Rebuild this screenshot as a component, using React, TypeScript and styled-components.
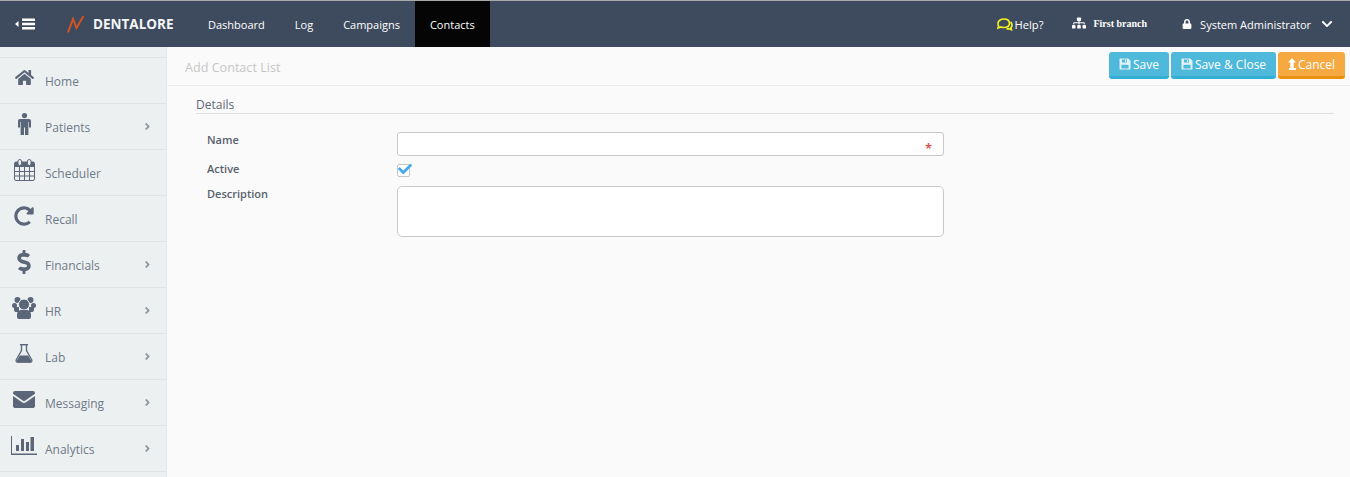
import styled, { createGlobalStyle } from 'styled-components';
import type { ReactNode } from 'react';
import {
  FaHome,
  FaRedoAlt,
  FaDollarSign,
  FaSitemap,
  FaLock,
  FaChevronDown,
  FaAngleRight,
  FaCheck,
} from 'react-icons/fa';

const GlobalStyle = createGlobalStyle`
  html, body {
    margin: 0;
    padding: 0;
    height: 100%;
    overflow: hidden;
    background: #fafafa;
    font-family: 'Open Sans', 'Liberation Sans', sans-serif;
  }
  * {
    box-sizing: border-box;
  }
`;

const Page = styled.div`
  width: 1350px;
  height: 477px;
  display: flex;
  flex-direction: column;
  overflow: hidden;
`;

const TopBar = styled.header`
  height: 47px;
  flex: none;
  display: flex;
  align-items: stretch;
  background: #3e4b5e;
  border-top: 1px solid #a9a9a9;
  color: #fff;
`;

const MenuToggle = styled.div`
  width: 67px;
  padding-left: 15px;
  display: flex;
  align-items: center;
`;

const Brand = styled.div`
  width: 141px;
  display: flex;
  align-items: center;
  gap: 8px;
  font-size: 13.5px;
  font-weight: 700;
  color: #f4f6f8;
`;

const NavLink = styled.a<{ $active?: boolean }>`
  display: flex;
  align-items: center;
  padding: 0 15px;
  font-size: 11px;
  color: #fff;
  background: ${(p) => (p.$active ? '#050505' : 'transparent')};
`;

const NavLinks = styled.div`
  display: flex;
  margin-left: -15px;
`;

const TopRight = styled.div`
  margin-left: auto;
  display: flex;
  align-items: center;
  padding-right: 17px;
  font-size: 11px;
`;

const HelpLink = styled.span`
  display: flex;
  align-items: center;
  gap: 1px;
  margin-right: 29px;
  font-size: 11.2px;
`;

const Branch = styled.span`
  display: flex;
  align-items: center;
  gap: 7px;
  margin-right: 35px;
  margin-top: -2px;
  font-family: 'Liberation Serif', serif;
  font-size: 10px;
  font-weight: 700;
  svg {
    font-size: 14px;
  }
`;

const UserMenu = styled.span`
  display: flex;
  align-items: center;
  svg:first-child {
    font-size: 10px;
    margin-right: 8px;
  }
  svg:last-child {
    font-size: 12px;
    margin-left: 10px;
  }
`;

const Body = styled.div`
  flex: 1;
  display: flex;
  min-height: 0;
`;

const Sidebar = styled.nav`
  width: 167px;
  flex: none;
  padding-top: 10px;
  background: #ecf0f1;
  border-right: 1px solid #e3e7e8;
`;

const SideItem = styled.div`
  height: 46px;
  position: relative;
  display: flex;
  align-items: center;
  padding-top: 2px;
  border-top: 1px solid #e0e4e6;
  font-size: 12px;
  color: #6f7a88;
`;

const SideIcon = styled.span`
  width: 48px;
  flex: none;
  display: flex;
  justify-content: center;
  align-items: center;
  margin-top: -8px;
  margin-right: -3px;
  color: #5b6678;
  font-size: 20px;
`;

const SideArrow = styled(FaAngleRight)`
  position: absolute;
  right: 13px;
  top: 17px;
  font-size: 11px;
  color: #8a939e;
`;

const Main = styled.main`
  flex: 1;
  min-width: 0;
  background: #fafafa;
`;

const TitleBar = styled.div`
  height: 39px;
  display: flex;
  align-items: flex-start;
  justify-content: space-between;
  padding: 5px 5px 0 18px;
  border-bottom: 1px solid #ededed;
`;

const PageTitle = styled.h1`
  margin: 7px 0 0;
  font-size: 12.6px;
  font-weight: 400;
  color: #c6c6c6;
`;

const Actions = styled.div`
  display: flex;
  gap: 2px;
`;

const ActionButton = styled.button<{ $tone: 'info' | 'warning'; $width: number }>`
  width: ${(p) => p.$width}px;
  height: 27px;
  padding: 0;
  display: flex;
  align-items: center;
  justify-content: center;
  gap: 2px;
  border: 0;
  border-bottom: 3px solid ${(p) => (p.$tone === 'info' ? '#31aed4' : '#e8920f')};
  border-radius: 3px;
  background: ${(p) => (p.$tone === 'info' ? '#4fb9db' : '#f5a940')};
  color: #fff;
  font-family: inherit;
  font-size: 12px;
`;

const Form = styled.section`
  padding: 9px 16px 0 29px;
`;

const SectionTitle = styled.h2`
  margin: 0 0 18px;
  height: 19px;
  font-size: 12px;
  font-weight: 400;
  line-height: 20px;
  color: #5f6874;
  border-bottom: 1px solid #e0e0e0;
`;

const Row = styled.div<{ $height: number }>`
  display: flex;
  align-items: flex-start;
  height: ${(p) => p.$height}px;
`;

const Label = styled.label<{ $top: number }>`
  width: 201px;
  flex: none;
  padding-left: 11px;
  margin-top: ${(p) => p.$top}px;
  font-size: 11px;
  font-weight: 600;
  line-height: 15px;
  color: #59616c;
`;

const Field = styled.div`
  width: 547px;
  height: 24px;
  position: relative;
  background: #fff;
  border: 1px solid #c9c9c9;
  border-radius: 3px;
`;

const Required = styled.span`
  position: absolute;
  right: 11px;
  top: 9px;
  font-size: 13px;
  font-weight: 600;
  line-height: 13px;
  color: #e2483d;
`;

const TextArea = styled.div`
  width: 547px;
  height: 51px;
  background: #fff;
  border: 1px solid #c9c9c9;
  border-radius: 5px;
`;

const CheckBox = styled.span`
  width: 13px;
  height: 13px;
  margin-top: 1px;
  position: relative;
  display: block;
  background: #fff;
  border: 1px solid #c4c4c4;
  border-radius: 2px;
  svg {
    position: absolute;
    left: 0;
    top: -3px;
    font-size: 14px;
    color: #46a9ee;
  }
`;

const ICON = '#5b6678';

const ToggleIcon = () => (
  <svg width="21" height="12" viewBox="0 0 21 12" fill="#fff">
    <path d="M3.500 3v6L0 6z" />
    <rect x="7" y="0.500" width="13" height="2.500" />
    <rect x="7" y="4.750" width="13" height="2.500" />
    <rect x="7" y="9" width="13" height="2.500" />
  </svg>
);

const Logo = () => (
  <svg width="18" height="18" viewBox="0 0 18 18" fill="none">
    <path d="M1 17.500 6 4l3.500 9L16.500 1" stroke="#d9531e" strokeWidth="1.900" />
  </svg>
);

const HelpIcon = () => (
  <svg width="16" height="14" viewBox="0 0 16 14" fill="none" stroke="#f2f020" strokeWidth="1.700">
    <path d="M1.600 9.200 1 11l3-1c.9.300 1.900.500 3 .500 3.200 0 5.500-1.600 5.500-4.200S10.200 2 7 2 1 3.700 1 6.300c0 1.100.2 2.100.6 2.900z" />
    <path d="M13.500 5c1 .8 1.500 1.900 1.500 3 0 1-.4 1.900-1 2.600l.4 2-2.400-1c-.8.300-1.700.4-2.500.3" />
  </svg>
);

const SaveIcon = () => (
  <svg width="12" height="12" viewBox="0 0 12 12" fill="none">
    <path d="M1 .5h8.300L11.500 2.700V11a.5.5 0 0 1-.5.5H1a.5.5 0 0 1-.5-.5V1A.5.5 0 0 1 1 .5z" fill="#dff2f8" />
    <rect x="3" y="1.500" width="5" height="3" fill="#4fb9db" />
    <rect x="6" y="2" width="1.200" height="2" fill="#dff2f8" />
    <rect x="2.500" y="6.800" width="7" height="3.700" fill="#4fb9db" />
  </svg>
);

const UpArrowIcon = () => (
  <svg width="8" height="12" viewBox="0 0 8 12" fill="#fff">
    <path d="M4 0 8 4.500H5.700V10H8V12H1V10H2.300V4.500H0z" />
  </svg>
);

const MaleIcon = () => (
  <svg width="13" height="22" viewBox="0 0 13 22" fill={ICON}>
    <circle cx="6.500" cy="2.600" r="2.600" />
    <path d="M2 6h9a2 2 0 0 1 2 2v6.500h-2V9h-.6v13H7V14.500H6V22H2.600V9H2v5.500H0V8a2 2 0 0 1 2-2z" />
  </svg>
);

const Calendar = () => (
  <svg width="21" height="22" viewBox="0 0 21 22" fill="none">
    <rect x="0.500" y="3" width="20" height="18.500" rx="1.500" stroke={ICON} />
    <path d="M.5 4.500A1.500 1.500 0 0 1 2 3h17a1.500 1.500 0 0 1 1.500 1.500V8H.5z" fill={ICON} />
    <rect x="4" y="0.500" width="3.500" height="6" rx="1.700" fill="#ecf0f1" stroke={ICON} />
    <rect x="13.500" y="0.500" width="3.500" height="6" rx="1.700" fill="#ecf0f1" stroke={ICON} />
    <path d="M1 12.500h19.500M1 17h19.500M5.500 8v13M10.500 8v13M15.500 8v13" stroke={ICON} />
  </svg>
);

const UsersIcon = () => (
  <svg width="24" height="22" viewBox="0 0 24 22" fill={ICON}>
    <circle cx="5.500" cy="3" r="3" />
    <circle cx="18.500" cy="3" r="3" />
    <circle cx="2.500" cy="8.500" r="2.500" />
    <circle cx="21.500" cy="8.500" r="2.500" />
    <path d="M2 10h5v5H3.500A2 2 0 0 1 2 13zM17 10h5v3a2 2 0 0 1-1.500 2H17z" />
    <circle cx="12" cy="7.500" r="5.500" stroke="#ecf0f1" strokeWidth="1" />
    <path d="M5 17.500C5 14.500 7.500 13 9 13h6c1.500 0 4 1.500 4 4.500V20c0 1.200-1 2-2 2H7c-1 0-2-.8-2-2z" />
  </svg>
);

const FlaskIcon = () => (
  <svg width="18" height="19" viewBox="0 0 18 19" fill="none">
    <path d="M5 .7h8" stroke={ICON} strokeWidth="1.400" />
    <path d="M6.500 1v5.500L1.300 15.800c-.6 1.200 0 2.400 1.400 2.400h12.600c1.400 0 2-1.200 1.400-2.400L11.500 6.500V1" stroke={ICON} strokeWidth="1.300" />
    <path d="M4.800 11.500h8.400l3.200 5.500c.3.800-.3 1.500-1 1.500H2.600c-.7 0-1.300-.7-1-1.500z" fill={ICON} />
  </svg>
);

const EnvelopeIcon = () => (
  <svg width="22" height="17" viewBox="0 0 22 17" fill="none">
    <rect width="22" height="17" rx="2" fill={ICON} />
    <path d="M-.5 3.500 9.500 10.500c1 .7 2 .7 3 0L22.500 3.500" stroke="#ecf0f1" strokeWidth="1.700" />
  </svg>
);

const Chart = () => (
  <svg width="26" height="19" viewBox="0 0 26 19" fill={ICON}>
    <path d="M0 0h1v17.500h25V19H0z" />
    <rect x="5" y="9" width="3" height="6" />
    <rect x="10" y="3" width="3" height="12" />
    <rect x="15" y="6" width="3" height="9" />
    <rect x="19.500" y="1" width="3.500" height="14" />
  </svg>
);

type Item = { label: string; icon: ReactNode; arrow?: boolean };

const sideItems: Item[] = [
  { label: 'Home', icon: <FaHome size={19} /> },
  { label: 'Patients', icon: <MaleIcon />, arrow: true },
  { label: 'Scheduler', icon: <Calendar /> },
  { label: 'Recall', icon: <FaRedoAlt size={20} /> },
  { label: 'Financials', icon: <FaDollarSign size={24} />, arrow: true },
  { label: 'HR', icon: <UsersIcon />, arrow: true },
  { label: 'Lab', icon: <FlaskIcon />, arrow: true },
  { label: 'Messaging', icon: <EnvelopeIcon />, arrow: true },
  { label: 'Analytics', icon: <Chart />, arrow: true },
  { label: '', icon: null },
];

export default function App() {
  return (
    <Page>
      <GlobalStyle />
      <TopBar>
        <MenuToggle>
          <ToggleIcon />
        </MenuToggle>
        <Brand>
          <Logo />
          DENTALORE
        </Brand>
        <NavLinks>
          <NavLink>Dashboard</NavLink>
          <NavLink>Log</NavLink>
          <NavLink>Campaigns</NavLink>
          <NavLink $active>Contacts</NavLink>
        </NavLinks>
        <TopRight>
          <HelpLink>
            <HelpIcon />
            Help?
          </HelpLink>
          <Branch>
            <FaSitemap />
            First branch
          </Branch>
          <UserMenu>
            <FaLock />
            System Administrator
            <FaChevronDown />
          </UserMenu>
        </TopRight>
      </TopBar>
      <Body>
        <Sidebar>
          {sideItems.map((item) => (
            <SideItem key={item.label}>
              <SideIcon>{item.icon}</SideIcon>
              {item.label}
              {item.arrow && <SideArrow />}
            </SideItem>
          ))}
        </Sidebar>
        <Main>
          <TitleBar>
            <PageTitle>Add Contact List</PageTitle>
            <Actions>
              <ActionButton $tone="info" $width={60}>
                <SaveIcon />
                Save
              </ActionButton>
              <ActionButton $tone="info" $width={105}>
                <SaveIcon />
                Save &amp; Close
              </ActionButton>
              <ActionButton $tone="warning" $width={67}>
                <UpArrowIcon />
                Cancel
              </ActionButton>
            </Actions>
          </TitleBar>
          <Form>
            <SectionTitle>Details</SectionTitle>
            <Row $height={31}>
              <Label $top={0}>Name</Label>
              <Field>
                <Required>*</Required>
              </Field>
            </Row>
            <Row $height={23}>
              <Label $top={-2}>Active</Label>
              <CheckBox>
                <FaCheck />
              </CheckBox>
            </Row>
            <Row $height={51}>
              <Label $top={0}>Description</Label>
              <TextArea />
            </Row>
          </Form>
        </Main>
      </Body>
    </Page>
  );
}
